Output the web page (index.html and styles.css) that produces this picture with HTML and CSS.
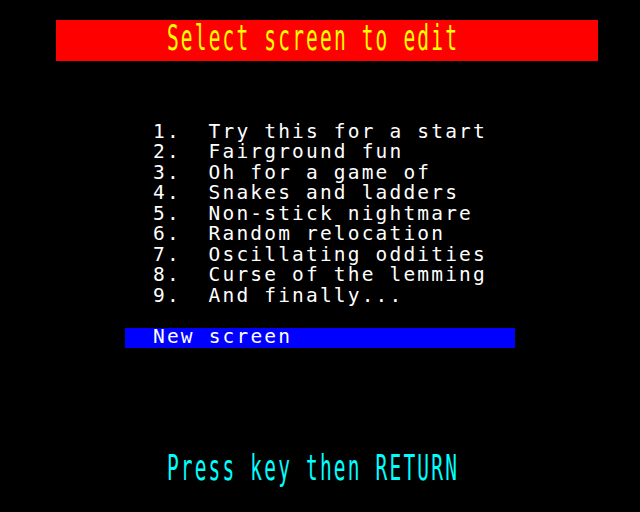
FILE: index.html
```html
<!DOCTYPE html>
<html>
<head>
<meta charset="utf-8">
<link rel="stylesheet" href="styles.css">
</head>
<body>
<div class="screen">
  <div class="title"><span class="dbl">Select screen to edit</span></div>
  <div class="item r6">1.  Try this for a start</div>
  <div class="item r7">2.  Fairground fun</div>
  <div class="item r8">3.  Oh for a game of</div>
  <div class="item r9">4.  Snakes and ladders</div>
  <div class="item r10">5.  Non-stick nightmare</div>
  <div class="item r11">6.  Random relocation</div>
  <div class="item r12">7.  Oscillating oddities</div>
  <div class="item r13">8.  Curse of the lemming</div>
  <div class="item r14">9.  And finally...</div>
  <div class="selected">New screen</div>
  <div class="footer"><span class="dbl">Press key then RETURN</span></div>
</div>
</body>
</html>
```
FILE: styles.css
```css
html, body {
  margin: 0;
  padding: 0;
  background: #000;
}
.screen {
  width: 640px;
  height: 512px;
  background: #000;
  display: grid;
  grid-template-columns: repeat(46, 13.913px);
  grid-template-rows: repeat(25, 20.48px);
  font-family: "DejaVu Sans Mono", monospace;
  font-size: 19.5px;
  letter-spacing: 2.173px;
  line-height: 18.5px;
  white-space: pre;
  overflow: hidden;
}
.dbl {
  display: inline-block;
  transform: scaleY(1.85);
  transform-origin: 0 0;
}
.title {
  grid-row: 2 / 4;
  grid-column: 5 / 44;
  background: #ff0000;
  color: #ffff00;
  padding-left: 111.3px;
  padding-top: 1.2px;
}
.item {
  grid-column: 12 / 44;
  color: #fff;
}
.r6 { grid-row: 7; }
.r7 { grid-row: 8; }
.r8 { grid-row: 9; }
.r9 { grid-row: 10; }
.r10 { grid-row: 11; }
.r11 { grid-row: 12; }
.r12 { grid-row: 13; }
.r13 { grid-row: 14; }
.r14 { grid-row: 15; }
.selected {
  grid-row: 17;
  grid-column: 10 / 38;
  background: #0000ff;
  color: #fff;
  padding-left: 27.83px;
}
.footer {
  grid-row: 23 / 25;
  grid-column: 13 / 44;
  color: #00ffff;
  padding-top: 1.2px;
}
```
